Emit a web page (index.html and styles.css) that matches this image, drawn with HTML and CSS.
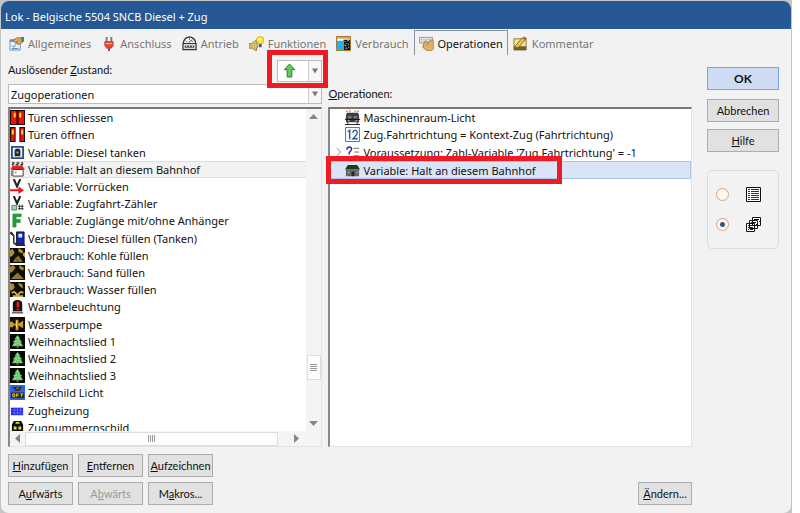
FILE: index.html
```html
<!DOCTYPE html>
<html lang="de">
<head>
	<meta charset="utf-8">
	<title>Lok - Belgische 5504 SNCB Diesel + Zug</title>
	<link rel="stylesheet" href="styles.css">
</head>
<body>
<svg class="defs" aria-hidden="true">
	<symbol id="i-general" viewBox="0 0 16 16">
		<path d="M1 4h11v11H1z" fill="#eaf3fb" stroke="#6e93ba"/>
		<path d="M1 4h11v2H1z" fill="#5b8fca"/>
		<path d="M3 10l2 2 2-3M3 13.500h7" stroke="#4675ad" fill="none"/>
		<path d="M4 5l4-3 7-.5V6l-4 3-4-1 2-2-3 .8z" fill="#d9a65b" stroke="#80592a" stroke-width=".7"/>
		<path d="M13 1h3v5h-3z" fill="#3e8f54"/>
	</symbol>
	<symbol id="i-plug" viewBox="0 0 16 16">
		<path d="M6 1v5M11 1v5" stroke="#777" stroke-width="2"/>
		<path d="M4 6h9v4l-2 3H6l-2-3z" fill="#e64a34" stroke="#a52a1c" stroke-width=".7"/>
		<path d="M5 8h7" stroke="#f9b4a4"/>
		<path d="M8.500 13v3" stroke="#555" stroke-width="2"/>
	</symbol>
	<symbol id="i-gauge" viewBox="0 0 16 16">
		<path d="M1.500 8q0-6 6.500-7q6.500 1 6.500 7z" fill="#f5f5f5" stroke="#333" stroke-width="1.300"/>
		<path d="M4 5l1 1M8 2.500V4M12 5l-1 1M7 7l4-3" stroke="#333"/>
		<path d="M1 8h14v6.500H1z" fill="#ddd" stroke="#333" stroke-width="1.300"/>
		<path d="M3 10h10v2.500H3z" fill="#444"/>
		<path d="M5 10v2M8 10v2M11 10v2" stroke="#eee"/>
	</symbol>
	<symbol id="i-func" viewBox="0 0 16 16">
		<path d="M0 8h3l5-4v12l-5-3H0z" fill="#d9bd66" stroke="#8b7030" stroke-width=".8"/>
		<path d="M8 7q3 3 0 7" fill="#f2e3a6" stroke="#8b7030" stroke-width=".8"/>
		<circle cx="12" cy="4.500" r="4" fill="#ffe336" stroke="#cda012" stroke-width=".8"/>
		<path d="M10.500 8.500h3v3.500h-3z" fill="#465d7b"/>
		<circle cx="11" cy="3.500" r="1.200" fill="#fffbd0"/>
	</symbol>
	<symbol id="i-usage" viewBox="0 0 16 16">
		<path d="M.5.500h15v15H.5z" fill="#fff" stroke="#996c26"/>
		<path d="M1 1h14v2H1z" fill="#e0a84a"/>
		<path d="M1 5h6.500v10H1z" fill="#22b3ea"/>
		<path d="M8 4h7v11H8z" fill="#161616"/>
		<path d="M9 6h1M12 5h2M11 8h1M9 10h2M13 9h1M10 13h2M13 12h1" stroke="#ccc"/>
	</symbol>
	<symbol id="i-ops" viewBox="0 0 16 16">
		<path d="M.5 1.500h14v6H.5z" fill="#eee" stroke="#8b98a6"/>
		<path d="M2 3.500h11M2 5.500h11" stroke="#7f8ea1" stroke-dasharray="1 1"/>
		<path d="M5 8l2-3 2 2 5-3 2 3v6l-3 3H9l-5-4z" fill="#dfb266" stroke="#8f672c" stroke-width=".8"/>
		<path d="M7 8l2 2M9 7l2 2" stroke="#8f672c" stroke-width=".7"/>
	</symbol>
	<symbol id="i-note" viewBox="0 0 16 16">
		<path d="M1 3h13v12H1z" fill="#f6e49a" stroke="#8d7730"/>
		<path d="M1 11h13v4H1z" fill="#6e6230"/>
		<path d="M3 10l7-8 3 2-7 8-4 1z" fill="#e9c94b" stroke="#594a1e" stroke-width=".8"/>
		<path d="M10 2l2-1.500 3 2L13 4z" fill="#d3575a"/>
	</symbol>
	<symbol id="i-closed" viewBox="0 0 16 16">
		<path d="M0 0h16v16H0z" fill="#190000"/>
		<path d="M1 1h6v14H1zM9 1h6v14H9z" fill="#e81010"/>
		<path d="M4 3h2v5H4zM10 3h2v5h-2z" fill="#ffe72e"/>
	</symbol>
	<symbol id="i-open" viewBox="0 0 16 16">
		<path d="M0 0h6v16H0zM10 0h6v16h-6z" fill="#190000"/>
		<path d="M1 1h4v14H1zM11 1h4v14h-4z" fill="#e81010"/>
		<path d="M2 3h2v5H2zM12 3h2v5h-2z" fill="#ffe72e"/>
	</symbol>
	<symbol id="i-tank" viewBox="0 0 16 16">
		<path d="M2 2h12v12H2z" fill="#e9eef6" stroke="#28508c" stroke-width="2"/>
		<path d="M6 4h4l1 2v6H5V6z" fill="#222"/>
		<path d="M7 7h2v2H7z" fill="#bbb"/>
	</symbol>
	<symbol id="i-halt" viewBox="0 0 16 16">
		<path d="M2 1h3M7 1h3M12 1h2M2 3h2M6 3h3M11 3h3" stroke="#333" stroke-width="1.500"/>
		<path d="M0 8l3-4h10l3 4z" fill="#e02222"/>
		<path d="M3 8h11v7H3z" fill="#fff" stroke="#333"/>
		<path d="M5 10h2v2H5z" fill="#999"/>
		<path d="M1 9h2v6H1z" fill="#888"/>
	</symbol>
	<symbol id="i-forward" viewBox="0 0 16 16">
		<path d="M4 0l3.500 8L11 0" fill="none" stroke="#222" stroke-width="2.200"/>
		<path d="M0 12h11" stroke="#f01414" stroke-width="2"/>
		<path d="M9 8l6 4-6 4z" fill="#f01414"/>
	</symbol>
	<symbol id="i-count" viewBox="0 0 16 16">
		<path d="M4 0l3.500 8L11 0" fill="none" stroke="#222" stroke-width="2.200"/>
		<path d="M2 10h5v5H2z" fill="#a7d0b1" stroke="#478b58"/>
		<path d="M10 9v6M13 9v6M8.500 11h6M8.500 13.500h6" stroke="#333"/>
	</symbol>
	<symbol id="i-flag" viewBox="0 0 16 16">
		<path d="M3 1h9v3H6.500v3H11v3H6.500v5H3z" fill="#20a436" stroke="#0c6f20" stroke-width=".5"/>
	</symbol>
	<symbol id="i-pump" viewBox="0 0 16 16">
		<path d="M7 1h8v13H7z" fill="#1525b4" stroke="#0d0d33"/>
		<path d="M9 3h4v4H9z" fill="#dfe6ff"/>
		<path d="M6 15h10" stroke="#222" stroke-width="2"/>
		<path d="M0 2l4 3v7q0 3 3 1M1 1l3 4" fill="none" stroke="#222" stroke-width="1.500"/>
	</symbol>
	<symbol id="i-coal" viewBox="0 0 16 16">
		<path d="M0 0h16v16H0z" fill="#0f0c04"/>
		<path d="M0 2l3-1 2 4-3 4H0zM9 0l5 3-1 3-4-2z" fill="#b08c34"/>
		<path d="M3 15l3-5 3-2 5 7z" fill="#77601f"/>
		<path d="M5 13h1M8 11h1M10 13h1" stroke="#e3c46b"/>
		<path d="M14 5h2v5l-2-2z" fill="#d9b34a"/>
	</symbol>
	<symbol id="i-sand" viewBox="0 0 16 16">
		<path d="M0 0h16v16H0z" fill="#0f0c04"/>
		<path d="M0 2l3-2 3 3-4 5H0zM10 0l5 3-1 3-4-2z" fill="#a3842f"/>
		<path d="M1 15l7-7 7 7z" fill="#8d7536"/>
	</symbol>
	<symbol id="i-water" viewBox="0 0 16 16">
		<path d="M0 0h16v16H0z" fill="#0f0c04"/>
		<path d="M0 1l4 1 1 4-3 3H0zM8 1l5 1 1 5-3-2z" fill="#b08c34"/>
		<path d="M2 12q2-3 4 0t4 0 4 0M3 15h11" stroke="#d6b34c" stroke-width="2" fill="none"/>
	</symbol>
	<symbol id="i-warn" viewBox="0 0 16 16">
		<path d="M3 13V5q0-4 5-4t5 4v8z" fill="#111"/>
		<path d="M7 3h3v6H7zM7 10h3v2H7z" fill="#ee1717"/>
		<path d="M2 14.500h12" stroke="#666" stroke-width="2"/>
	</symbol>
	<symbol id="i-wpump" viewBox="0 0 16 16">
		<path d="M0 0h16v16H0z" fill="#0f0c04"/>
		<path d="M0 5h3l1 2h2V3h3v4l5-3v8l-5-3v5H6V9H4l-1 2H0z" fill="#c69b2c"/>
		<path d="M7 4v8" stroke="#f5d673"/>
	</symbol>
	<symbol id="i-tree" viewBox="0 0 16 16">
		<path d="M0 0h16v16H0z" fill="#050805"/>
		<path d="M8 1l3 4-1 .5 3 3-1.500.5L14 13H2l2.500-4L3 8.500l3-3L5 5z" fill="#6cc870"/>
		<path d="M7 13h2v2H7z" fill="#8a6b3a"/>
		<path d="M8 3v1M6 8h1M9 7h1M5 11h1M8 10h1M11 11h1" stroke="#d8f5d4"/>
	</symbol>
	<symbol id="i-sign" viewBox="0 0 16 16">
		<path d="M0 0h16v16H0z" fill="#2f63dd"/>
		<path d="M3 2h10l-3 4H6z" fill="#2c2a1d"/>
		<path d="M1 8h14v6H1z" fill="#332c09"/>
		<path d="M3 9.500h2v3H3zM7 12.500v-3h2M7 11h2M11 9.500h3M12.500 9.500v3" stroke="#f1cb20" fill="none"/>
		<path d="M7 3h2v1H7z" fill="#f1cb20"/>
	</symbol>
	<symbol id="i-heat" viewBox="0 0 16 16">
		<path d="M1 5h13v8H1z" fill="#1d25f0"/>
		<path d="M1 7.500h13M1 10.500h13M5 5v8M8 5v8M11 5v8" stroke="#6b72ff" stroke-width=".8"/>
	</symbol>
	<symbol id="i-plate" viewBox="0 0 16 16">
		<path d="M4 1h8l2 4v9H2V5z" fill="#0c0c0c"/>
		<path d="M6 2h4v2H6zM4 7h3v3H4zM9 7h3v3H9z" fill="#dede35"/>
	</symbol>
	<symbol id="i-engine" viewBox="0 0 16 16">
		<path d="M2 3h12l1 3v7H1V6z" fill="#3b3b3b"/>
		<path d="M3 6h4v3H3zM9 6h4v3H9z" fill="#777"/>
		<path d="M0 10h16M3 13v2M13 13v2M0 15.500h16" stroke="#111"/>
		<path d="M1 1l2 1M15 1l-2 1M4 1h2M10 1h2" stroke="#e83434"/>
		<path d="M3 11.500h2M11 11.500h2" stroke="#ddd"/>
	</symbol>
	<symbol id="i-number" viewBox="0 0 16 16">
		<path d="M.5.500h15v15H.5z" fill="#f2f6fb" stroke="#4d7096"/>
		<path d="M3 5l2-1.500V13M8.500 6q0-2.500 2.300-2.500T13 6q0 2-4.500 6.500H13.500" fill="none" stroke="#2a5a94" stroke-width="1.400"/>
	</symbol>
	<symbol id="i-cond" viewBox="0 0 16 16">
		<path d="M2 5q0-3 2.500-3T7 4.500Q7 6 4.500 8v2M4.500 12v2" fill="none" stroke="#35309a" stroke-width="1.600"/>
		<path d="M9 3.500h6M10 7.500h5M9 11.500h6" stroke="#666"/>
	</symbol>
	<symbol id="i-station" viewBox="0 0 16 16">
		<path d="M0 7l3-5h10l3 5z" fill="#143d18"/>
		<path d="M1 7h14v7H1z" fill="#656565"/>
		<path d="M3 9h2v2H3zM12 9h2v2h-2z" fill="#999"/>
		<path d="M7 9h3v5H7z" fill="#292929"/>
	</symbol>
	<symbol id="i-list" viewBox="0 0 15 15">
		<path d="M.5.500h14v14H.5z" fill="#fff" stroke="#111"/>
		<path d="M2 2.500h2M2 4.500h2M2 6.500h2M2 8.500h2M2 10.500h2M2 12.500h2M5 2.500h8M5 4.500h8M5 6.500h8M5 8.500h8M5 10.500h8M5 12.500h8" stroke="#333"/>
	</symbol>
	<symbol id="i-cards" viewBox="0 0 15 15">
		<path d="M6.500.500h8v8h-8zM3.500 3.500h8v8h-8zM.5 6.500h8v8h-8z" fill="#fff" stroke="#111"/>
		<path d="M8 2.500h5M13 4.500h1M5 5.500h5M10 7.500h1" stroke="#111"/>
		<path d="M2 8.500h1M4 8.500h3M2 10.500h1M4 10.500h3M2 12.500h1M4 12.500h3" stroke="#222"/>
	</symbol>
	<symbol id="i-up" viewBox="0 0 16 16">
		<path d="M8 1l5.500 6H10.500v8h-5V7h-3z" fill="#62c95a" stroke="#237a2b"/>
	</symbol>
</svg>
<div class="desk">
<main class="window">
	<h1 class="title">Lok - Belgische 5504 SNCB Diesel + Zug</h1>
	<nav class="tabs">
		<button class="tab"><svg class="icon"><use href="#i-general"/></svg>Allgemeines</button>
		<button class="tab"><svg class="icon"><use href="#i-plug"/></svg>Anschluss</button>
		<button class="tab"><svg class="icon"><use href="#i-gauge"/></svg>Antrieb</button>
		<button class="tab"><svg class="icon"><use href="#i-func"/></svg>Funktionen</button>
		<button class="tab"><svg class="icon"><use href="#i-usage"/></svg>Verbrauch</button>
		<button class="tab active"><svg class="icon"><use href="#i-ops"/></svg>Operationen</button>
		<button class="tab"><svg class="icon"><use href="#i-note"/></svg>Kommentar</button>
	</nav>
	<div class="content">
		<section class="column">
			<div class="head">
				<div class="state">
					<label for="state">Auslösender <u>Z</u>ustand:</label>
					<div class="combo small">
						<select id="direction" aria-label="Richtung"><option></option></select>
						<svg class="icon arrow"><use href="#i-up"/></svg>
						<svg class="drop" viewBox="0 0 5 4"><path d="M0 0h5L2.500 4z"/></svg>
						<span class="mark mark-combo"></span>
					</div>
				</div>
				<div class="combo">
					<select id="state"><option>Zugoperationen</option></select>
					<svg class="drop" viewBox="0 0 5 4"><path d="M0 0h5L2.500 4z"/></svg>
				</div>
			</div>
			<div class="box">
				<div class="scroll">
					<ul class="states">
						<li><svg class="icon"><use href="#i-closed"/></svg>Türen schliessen</li>
						<li><svg class="icon"><use href="#i-open"/></svg>Türen öffnen</li>
						<li><svg class="icon"><use href="#i-tank"/></svg>Variable: Diesel tanken</li>
						<li class="current"><svg class="icon"><use href="#i-halt"/></svg>Variable: Halt an diesem Bahnhof</li>
						<li><svg class="icon"><use href="#i-forward"/></svg>Variable: Vorrücken</li>
						<li><svg class="icon"><use href="#i-count"/></svg>Variable: Zugfahrt-Zähler</li>
						<li><svg class="icon"><use href="#i-flag"/></svg>Variable: Zuglänge mit/ohne Anhänger</li>
						<li><svg class="icon"><use href="#i-pump"/></svg>Verbrauch: Diesel füllen (Tanken)</li>
						<li><svg class="icon"><use href="#i-coal"/></svg>Verbrauch: Kohle füllen</li>
						<li><svg class="icon"><use href="#i-sand"/></svg>Verbrauch: Sand füllen</li>
						<li><svg class="icon"><use href="#i-water"/></svg>Verbrauch: Wasser füllen</li>
						<li><svg class="icon"><use href="#i-warn"/></svg>Warnbeleuchtung</li>
						<li><svg class="icon"><use href="#i-wpump"/></svg>Wasserpumpe</li>
						<li><svg class="icon"><use href="#i-tree"/></svg>Weihnachtslied 1</li>
						<li><svg class="icon"><use href="#i-tree"/></svg>Weihnachtslied 2</li>
						<li><svg class="icon"><use href="#i-tree"/></svg>Weihnachtslied 3</li>
						<li><svg class="icon"><use href="#i-sign"/></svg>Zielschild Licht</li>
						<li><svg class="icon"><use href="#i-heat"/></svg>Zugheizung</li>
						<li><svg class="icon"><use href="#i-plate"/></svg>Zugnummernschild</li>
					</ul>
					<div class="bar vertical">
						<svg class="tip" viewBox="0 0 9 9"><path d="M0 7l4.500-5L9 7z"/></svg>
						<span class="track"></span>
						<span class="thumb"></span>
						<span class="rest"></span>
						<svg class="tip" viewBox="0 0 9 9"><path d="M0 2l4.500 5L9 2z"/></svg>
					</div>
				</div>
				<div class="bar horizontal">
					<svg class="tip" viewBox="0 0 9 9"><path d="M7 0L2 4.500 7 9z"/></svg>
					<span class="thumb"></span>
					<svg class="tip" viewBox="0 0 9 9"><path d="M2 0l5 4.500L2 9z"/></svg>
				</div>
			</div>
			<div class="buttons">
				<button class="btn"><u>H</u>inzufügen</button>
				<button class="btn"><u>E</u>ntfernen</button>
				<button class="btn"><u>A</u>ufzeichnen</button>
				<button class="btn">A<u>u</u>fwärts</button>
				<button class="btn" disabled>A<u>b</u>wärts</button>
				<button class="btn">M<u>a</u>kros...</button>
			</div>
		</section>
		<section class="column">
			<div class="head">
				<h2 class="caption"><u>O</u>perationen:</h2>
			</div>
			<div class="box">
				<ul class="operations">
					<li><svg class="icon"><use href="#i-engine"/></svg>Maschinenraum-Licht</li>
					<li><svg class="icon"><use href="#i-number"/></svg>Zug.Fahrtrichtung = Kontext-Zug (Fahrtrichtung)</li>
					<li class="parent"><svg class="icon"><use href="#i-cond"/></svg>Voraussetzung: Zahl-Variable 'Zug.Fahrtrichtung' = -1</li>
					<li class="selected"><svg class="icon"><use href="#i-station"/></svg>Variable: Halt an diesem Bahnhof<span class="mark mark-row"></span></li>
				</ul>
			</div>
			<div class="buttons end">
				<button class="btn"><u>Ä</u>ndern...</button>
			</div>
		</section>
		<aside class="side">
			<button class="btn ok">OK</button>
			<button class="btn">Abbrechen</button>
			<button class="btn"><u>H</u>ilfe</button>
			<div class="views">
				<label><input type="radio" name="view" aria-label="Liste"><svg class="icon"><use href="#i-list"/></svg></label>
				<label><input type="radio" name="view" aria-label="Karten" checked><svg class="icon"><use href="#i-cards"/></svg></label>
			</div>
		</aside>
	</div>
</main>
</div>
</body>
</html>
```

FILE: styles.css
```css
*{
	box-sizing: border-box;
}
body{
	margin: 0;
	padding-right: 8px;
	background: #fff;
	font-family: "Noto Sans", "Open Sans", sans-serif;
	font-size: 11px;
	color: #111;
}
.defs{
	display: none;
}
.desk{
	height: 100vh;
	padding: 1px 1px 0;
	background: #c4c6c6;
}
.window{
	display: flex;
	flex-direction: column;
	height: 100%;
	border-radius: 8px;
	overflow: hidden;
	background: #f2f2f2;
}
.title{
	margin: 0;
	padding: 0 4px;
	line-height: 32px;
	height: 28px;
	font-size: 11px;
	font-weight: normal;
	color: #fff;
	background: #265896;
}
.icon{
	flex: none;
	width: 15px;
	height: 15px;
}
button, select{
	font: inherit;
	color: inherit;
}
u{
	text-underline-offset: 1px;
}

/* tabs */
.tabs{
	display: flex;
	height: 26px;
	padding: 1px 3px 0;
}
.tab{
	display: flex;
	align-items: center;
	gap: 4px;
	padding: 0 4px;
	border: 1px solid transparent;
	border-bottom: none;
	background: none;
	color: #767676;
}
.tab.active{
	border-color: #8b93a0;
	color: #111;
}

/* columns */
.content{
	flex: 1;
	min-height: 0;
	display: grid;
	grid-template-columns: minmax(0, 314fr) minmax(0, 363fr) 81px;
	column-gap: 6px;
	padding: 5px 12px 8px 7px;
}
.column{
	display: flex;
	flex-direction: column;
	min-height: 0;
}
.head{
	display: flex;
	flex-direction: column;
	justify-content: flex-end;
	gap: 2px;
	height: 44px;
	margin-bottom: 3px;
	font-family: Lato, "Liberation Sans", sans-serif;
}
.state{
	display: flex;
	justify-content: space-between;
	line-height: 20px;
}
.caption{
	margin: 0;
	font-size: 11px;
	font-weight: normal;
	line-height: 20px;
}
.combo{
	position: relative;
}
.combo select{
	display: block;
	width: 100%;
	height: 20px;
	padding: 0 2px;
	border: 1px solid #bcbcbc;
	border-radius: 0;
	appearance: none;
	background: #fff;
	font-family: "Noto Sans", "Open Sans", sans-serif;
}
.drop{
	position: absolute;
	top: 1px;
	right: 1px;
	width: 13px;
	height: calc(100% - 2px);
	padding: 0 3px;
	border-left: 1px solid #ccc;
	background: #f7f7f7;
	fill: #777;
	pointer-events: none;
}
.combo.small{
	width: 45px;
}
.combo.small select{
	height: 22px;
}
.arrow{
	position: absolute;
	top: 3px;
	left: 5px;
}
.mark{
	position: absolute;
	z-index: 1;
	border: 5px solid #ed1c24;
	pointer-events: none;
}
.mark-combo{
	inset: -10px -6px -6px -10px;
}
.mark-row{
	inset: -6px 128px -6px -5px;
}

/* lists */
.box{
	flex: 1;
	min-height: 0;
	display: flex;
	flex-direction: column;
	border: 1px solid #e3e3e3;
	border-top: 2px solid #777;
	border-left: 2px solid #888;
	background: #fff;
}
.box ul{
	margin: 0;
	padding: 0;
	list-style: none;
}
.box li{
	display: flex;
	align-items: center;
	gap: 3px;
	white-space: nowrap;
}
.scroll{
	flex: 1;
	min-height: 0;
	display: flex;
	overflow: hidden;
}
.states{
	flex: 1;
	display: grid;
	grid-auto-rows: 1fr;
	height: 327px;
}
.current{
	border: solid #ddd;
	border-width: 1px 0;
	background: #f2f2f2;
}
.operations li{
	position: relative;
	height: 17px;
	padding-left: 15px;
}
.operations .parent{
	height: 18px;
}
.operations .parent::before{
	content: "";
	position: absolute;
	left: 4px;
	width: 5px;
	height: 5px;
	border: solid #aaa;
	border-width: 1px 1px 0 0;
	transform: rotate(45deg);
}
.operations .selected{
	height: 18px;
	border: 1px solid #aac4ee;
	padding-left: 14px;
	background: #d9e5f6;
}
.bar{
	display: flex;
	align-items: center;
	background: #f4f4f4;
}
.tip{
	flex: none;
	width: 9px;
	height: 9px;
	margin: 3px;
	fill: #858585;
}
.thumb{
	border: 1px solid #ddd;
	background: #fdfdfd;
}
.vertical{
	flex-direction: column;
	width: 15px;
}
.vertical .track{
	flex: 233;
}
.vertical .thumb{
	width: 14px;
	height: 25px;
	background: repeating-linear-gradient(#999 0 1px, transparent 1px 2px) center / 7px 7px no-repeat, #fdfdfd;
}
.vertical .rest{
	flex: 36;
}
.horizontal{
	height: 15px;
	padding-right: 17px;
}
.horizontal .thumb{
	flex: 1;
	height: 14px;
	margin-right: 11px;
	background: repeating-linear-gradient(90deg, #999 0 1px, transparent 1px 2px) center / 7px 7px no-repeat, #fdfdfd;
}

/* buttons */
.btn{
	height: 23px;
	padding: 0;
	border: 1px solid #adadad;
	background: #e1e1e1;
	font-family: Lato, "Liberation Sans", sans-serif;
}
.btn:disabled{
	color: #9a9a9a;
}
.buttons{
	display: grid;
	grid-template-columns: repeat(3, 65px);
	align-content: end;
	gap: 5px;
	height: 58px;
}
.buttons.end{
	grid-template-columns: 54px;
	justify-content: end;
}
.side{
	display: flex;
	flex-direction: column;
	gap: 7px;
	padding: 7px 0 0 9px;
}
.side .ok{
	margin-bottom: 2px;
	border-color: #7aa3dd;
	background: #cddcf2;
	font-size: 12px;
	font-weight: bold;
}
.views{
	display: flex;
	flex-direction: column;
	justify-content: space-evenly;
	height: 79px;
	margin-top: 11px;
	border: 1px solid #dcdcdc;
	border-radius: 5px;
}
.views label{
	display: flex;
	align-items: center;
	gap: 17px;
	padding-left: 8px;
}
.views input{
	width: 13px;
	height: 13px;
	margin: 0;
	border: 1px solid #d3a68c;
	border-radius: 50%;
	appearance: none;
	background: #fff6ee;
}
.views input:checked{
	background: radial-gradient(circle, #31557f 2px, #fff6ee 3px);
}
```
